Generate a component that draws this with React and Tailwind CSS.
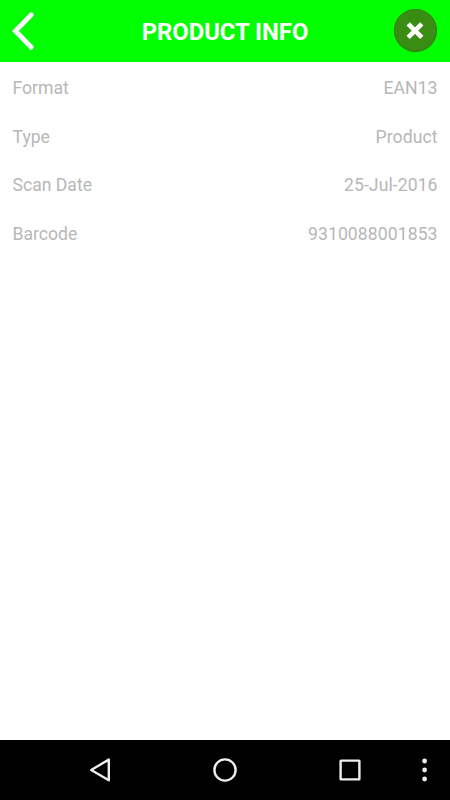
const rows = [
  ['Format', 'EAN13'],
  ['Type', 'Product'],
  ['Scan Date', '25-Jul-2016'],
  ['Barcode', '9310088001853'],
];

function Header() {
  return (
    <header className="flex h-[62px] shrink-0 items-center justify-between bg-[#00ff00] px-3">
      <button aria-label="Back" className="flex w-[48px]">
        <svg width="30" height="44" viewBox="4 0 30 44" fill="none" stroke="white" strokeWidth="4.8" strokeLinecap="round" strokeLinejoin="miter">
          <path d="M23.3 5.7 L7.4 22 L23.3 38.3" />
        </svg>
      </button>
      <h1 className="pt-[4px] text-[23.8px] font-bold text-white">PRODUCT INFO</h1>
      <button aria-label="Close" className="flex w-[48px] justify-end">
        <svg width="45" height="44" viewBox="0 0 45 44" fill="none">
          <circle cx="22.5" cy="21.5" r="21.5" fill="#398d13" />
          <circle cx="22.5" cy="21.5" r="21" stroke="#368012" strokeWidth="1" />
          <path d="M15.2 14.8 L28.8 28.4 M28.8 14.8 L15.2 28.4" stroke="white" strokeWidth="4.6" />
        </svg>
      </button>
    </header>
  );
}

function NavigationBar() {
  return (
    <nav className="h-[60px] shrink-0 bg-black">
      <svg width="450" height="60" viewBox="0 0 450 60" fill="none" stroke="#eeeeee" strokeWidth="2.4" strokeLinejoin="round">
        <path d="M108.8 19.6 V40.2 L91.2 30 Z" />
        <circle cx="225" cy="30" r="10.6" />
        <rect x="340.6" y="20.6" width="18.8" height="18.8" rx="0.5" />
        <g fill="#eeeeee" stroke="none">
          <circle cx="424.6" cy="21" r="2.4" />
          <circle cx="424.6" cy="30" r="2.4" />
          <circle cx="424.6" cy="39" r="2.4" />
        </g>
      </svg>
    </nav>
  );
}

export default function App() {
  return (
    <div className="flex h-[800px] w-[450px] flex-col bg-white font-[Roboto,sans-serif]">
      <Header />
      <main className="flex-1 px-[12.5px] pt-[2px]">
        {rows.map(([label, value]) => (
          <div key={label} className="flex h-[48.6px] items-center justify-between text-[17.6px] text-[#b7b7b7]">
            <span>{label}</span>
            <span className="-mr-[0.1px] tracking-[0.08px]">{value}</span>
          </div>
        ))}
      </main>
      <NavigationBar />
    </div>
  );
}
